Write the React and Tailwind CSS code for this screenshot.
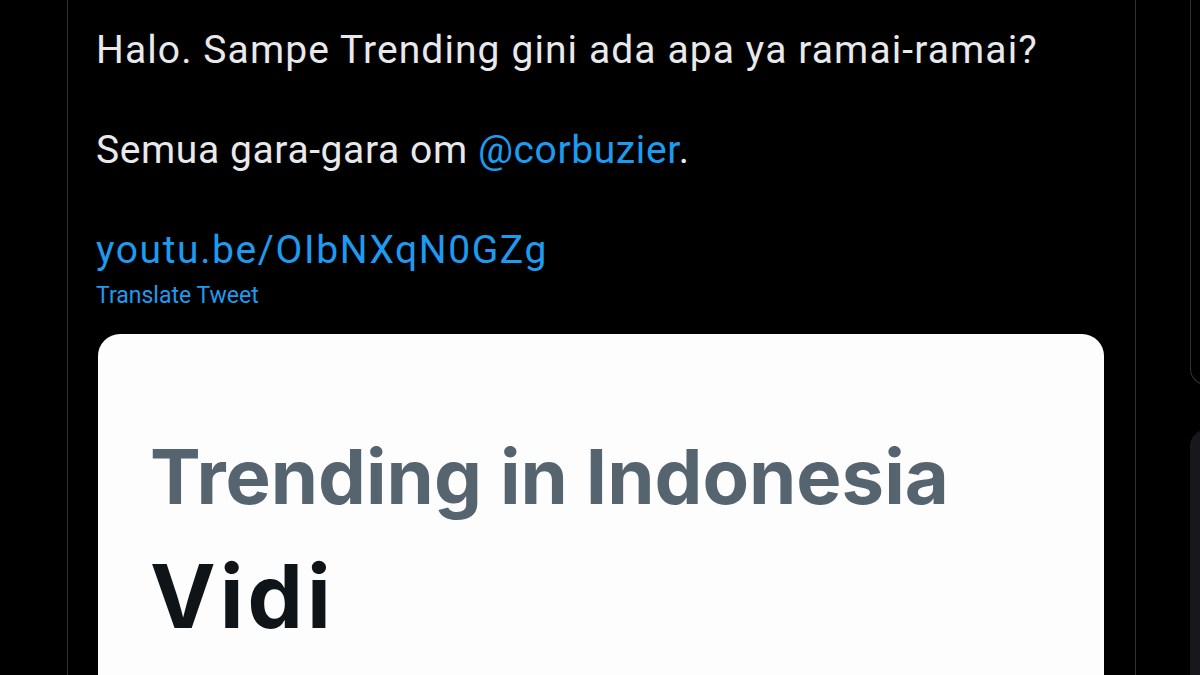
export default function App() {
  return (
    <div className="w-[1200px] h-[675px] bg-black overflow-hidden flex" style={{ fontFamily: "Roboto, 'Open Sans', sans-serif" }}>
      <div className="w-[67px] shrink-0" />
      {/* Tweet column */}
      <div className="w-[1069px] shrink-0 border-x border-[#2f3336] pl-[28px] pt-[25px]">
        <div className="text-[39px] leading-[50px]">
          <p className="text-[#e7e9ea] tracking-[1.1px]">Halo. Sampe Trending gini ada apa ya ramai-ramai?</p>
          <p className="text-[#e7e9ea] mt-[50px] tracking-[0.6px]">
            Semua gara-gara om <span className="text-[#1d9bf0]">@corbuzier</span>.
          </p>
          <p className="text-[#1d9bf0] mt-[50px] tracking-[1.6px]">youtu.be/OIbNXqN0GZg</p>
        </div>
        <p className="text-[23px] leading-[32px] text-[#1d9bf0] mt-[5px]">Translate Tweet</p>
        <div className="mt-[22px] ml-[2px] w-[1006px] h-[400px] bg-[#fdfdfd] rounded-[22px] pl-[52px] pt-[97px]" style={{ fontFamily: "Inter, Lato, sans-serif" }}>
          <p className="text-[76px] leading-[90px] font-bold text-[#566470]">Trending in Indonesia</p>
          <p className="text-[88px] leading-[110px] font-bold tracking-[4px] text-[#0f1419] mt-[20px]">Vidi</p>
        </div>
      </div>
      {/* Right sidebar */}
      <div className="flex-1 pl-[54px] flex flex-col">
        <div className="h-[395px] -mt-[10px] border-l border-b border-[#2f3336] rounded-bl-[16px] w-[40px]" />
        <div className="mt-[45px] flex-1 bg-[#16181c] rounded-tl-[16px] w-[40px]" />
      </div>
    </div>
  );
}
